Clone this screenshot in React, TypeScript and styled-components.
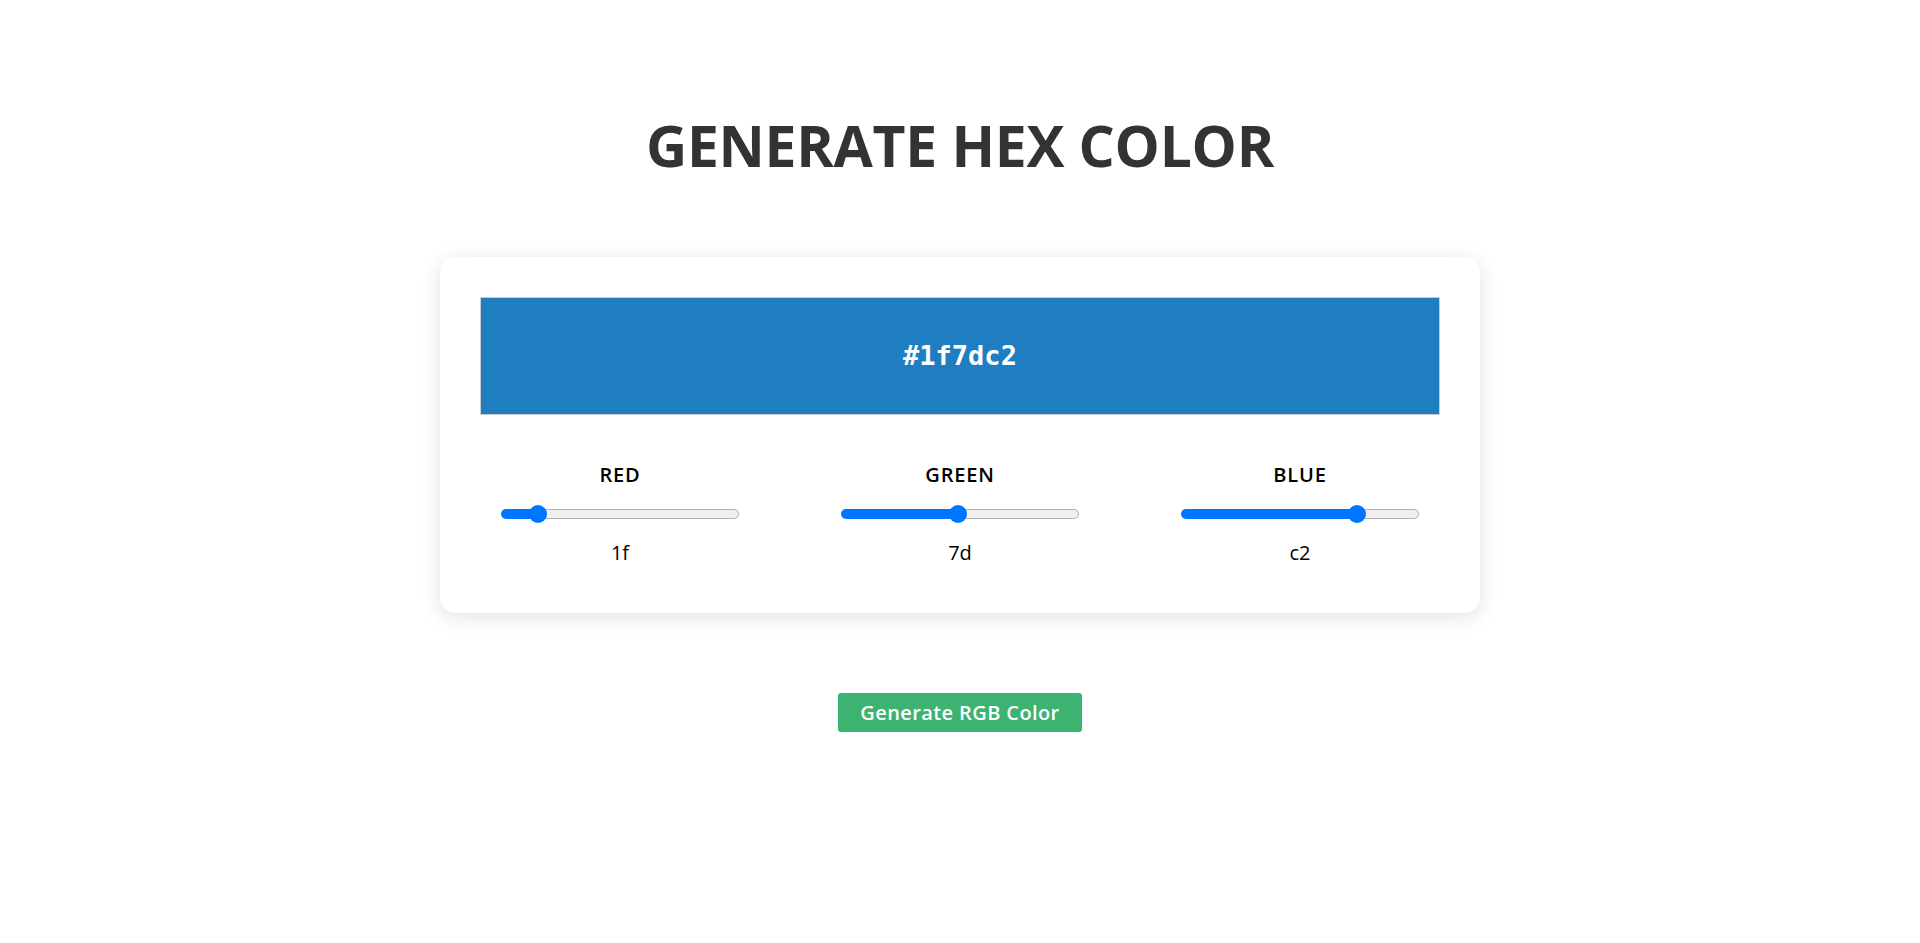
import React, { useState } from "react";
import styled, { createGlobalStyle } from "styled-components";

const GlobalStyle = createGlobalStyle`
  html, body {
    margin: 0;
    padding: 0;
    background: #ffffff;
  }
  body {
    font-family: "Open Sans", "Noto Sans", Arial, sans-serif;
    color: #000;
  }
  * { box-sizing: border-box; }
`;

const Page = styled.main`
  display: flex;
  flex-direction: column;
  align-items: center;
  padding-top: 111px;
`;

const Title = styled.h1`
  margin: 0;
  font-family: "Open Sans", "Noto Sans", sans-serif;
  font-weight: 700;
  font-size: 57px;
  line-height: 68px;
  color: #333333;
  letter-spacing: -0.3px;
`;

const Card = styled.section`
  margin-top: 78px;
  width: 1040px;
  padding: 40px 10px 48px;
  background: #ffffff;
  border-radius: 15px;
  box-shadow: 0 4px 20px rgba(0, 0, 0, 0.12);
`;

const Swatch = styled.div<{ $color: string }>`
  margin: 0 30px;
  height: 118px;
  border: 1px solid #cccccc;
  background: ${(p) => p.$color};
  display: flex;
  align-items: center;
  justify-content: center;
`;

const HexText = styled.span`
  font-family: "DejaVu Sans Mono", "Liberation Mono", monospace;
  font-weight: 700;
  font-size: 27px;
  line-height: 32px;
  color: #ffffff;
`;

const Controls = styled.div`
  margin-top: 48px;
  display: flex;
  justify-content: space-around;
`;

const Channel = styled.div`
  width: 340px;
  display: flex;
  flex-direction: column;
  align-items: center;
`;

const Label = styled.label`
  font-size: 20px;
  line-height: 24px;
  font-weight: 600;
  letter-spacing: 0.8px;
  color: #000;
`;

const Range = styled.input<{ $ratio: number }>`
  -webkit-appearance: none;
  appearance: none;
  margin: 18px 0 0;
  padding: 0;
  width: 238px;
  height: 18px;
  background: transparent;
  cursor: pointer;

  &::-webkit-slider-runnable-track {
    height: 10px;
    border-radius: 5px;
    border: 1px solid transparent;
    background:
      linear-gradient(
          to right,
          #0075ff calc(9px + ${(p) => p.$ratio} * (100% - 18px)),
          transparent calc(9px + ${(p) => p.$ratio} * (100% - 18px))
        )
        border-box,
      linear-gradient(#efefef, #efefef) padding-box,
      linear-gradient(#b2b2b2, #b2b2b2) border-box;
  }

  &::-webkit-slider-thumb {
    -webkit-appearance: none;
    appearance: none;
    width: 18px;
    height: 18px;
    margin-top: -5px;
    border: none;
    border-radius: 50%;
    background: #0075ff;
  }

  &:focus {
    outline: none;
  }
`;

const Value = styled.span`
  margin-top: 18px;
  font-size: 20px;
  line-height: 24px;
  font-weight: 400;
  color: #000;
`;

const GenerateButton = styled.button`
  margin-top: 80px;
  height: 39px;
  padding: 0 22px;
  border: none;
  border-radius: 3px;
  background: #3cb371;
  color: #ffffff;
  font-family: "Open Sans", "Noto Sans", sans-serif;
  font-size: 20px;
  font-weight: 600;
  letter-spacing: 0.4px;
  cursor: pointer;
`;

const toHex = (n: number) => n.toString(16).padStart(2, "0");

export default function App() {
  const [rgb, setRgb] = useState<[number, number, number]>([0x1f, 0x7d, 0xc2]);
  const names = ["RED", "GREEN", "BLUE"];
  const hex = `#${rgb.map(toHex).join("")}`;

  return (
    <>
      <GlobalStyle />
      <Page>
        <Title>GENERATE HEX COLOR</Title>
        <Card>
          <Swatch $color={hex}>
            <HexText>{hex}</HexText>
          </Swatch>
          <Controls>
            {names.map((name, i) => (
              <Channel key={name}>
                <Label htmlFor={`ch-${name}`}>{name}</Label>
                <Range
                  id={`ch-${name}`}
                  type="range"
                  min={0}
                  max={255}
                  value={rgb[i]}
                  $ratio={rgb[i] / 255}
                  onChange={(e) => {
                    const next = [...rgb] as [number, number, number];
                    next[i] = Number(e.target.value);
                    setRgb(next);
                  }}
                />
                <Value>{toHex(rgb[i])}</Value>
              </Channel>
            ))}
          </Controls>
        </Card>
        <GenerateButton type="button">Generate RGB Color</GenerateButton>
      </Page>
    </>
  );
}
